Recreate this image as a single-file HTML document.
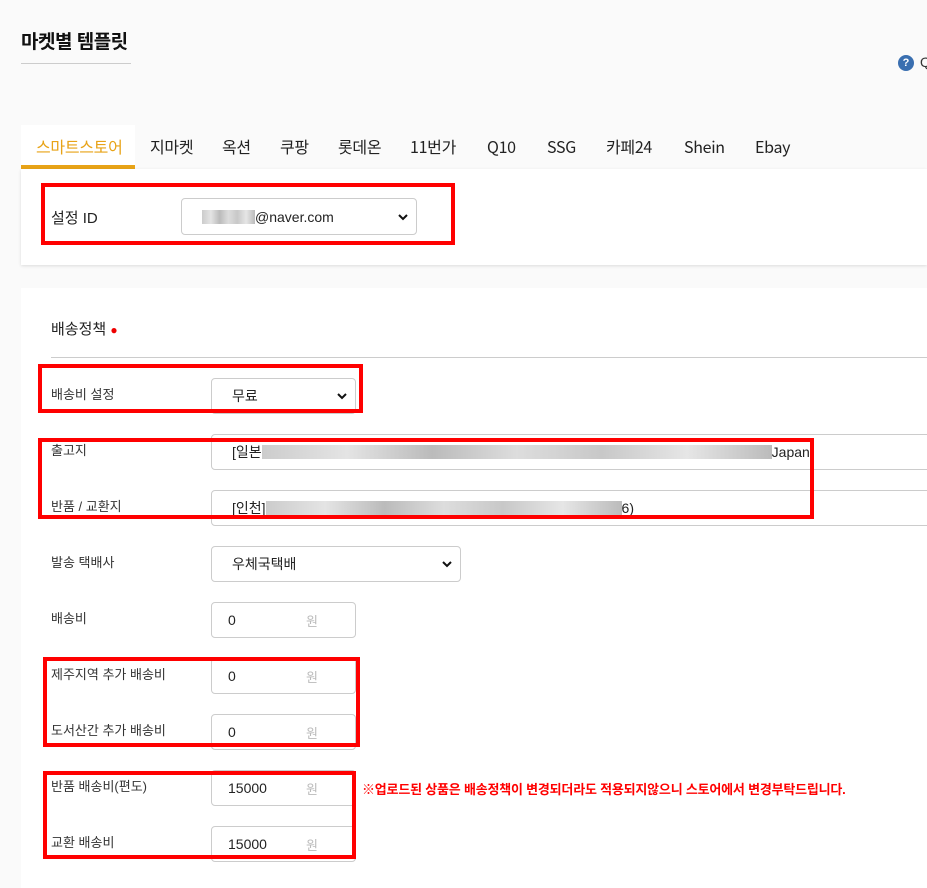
<!DOCTYPE html><html><head><meta charset="utf-8"><style>
*{box-sizing:border-box;margin:0;padding:0}
body{width:927px;height:887px;overflow:hidden;background:#fafafa;font-family:"Liberation Sans","Noto Sans CJK KR",sans-serif;color:#222;position:relative}
.a{position:absolute}
.tab{position:absolute;top:136px;height:20px;line-height:20px;font-size:16px;color:#222;font-family:"Noto Sans CJK KR","Liberation Sans",sans-serif;letter-spacing:-0.3px}
.box{position:absolute;background:#fff;border:1px solid #ccc;border-radius:4px;font-size:14px;padding-left:16px;display:flex;align-items:center}
.red{position:absolute;border:4px solid #f00}
.lab{position:absolute;left:51px;font-size:13px;color:#333;line-height:16px}
.won{position:absolute;left:94px;color:#bbb;font-size:13px}
.chev{position:absolute;right:8px;top:50%;margin-top:-4px}
.blur{display:inline-block;height:14px;background:linear-gradient(90deg,#ccc,#e4e4e4,#bbb,#ddd,#c8c8c8,#e6e6e6,#bbb)}
</style></head><body>
<div class="a" style="left:21px;top:27px;font-size:19px;font-weight:bold;color:#111;letter-spacing:-0.5px">마켓별 템플릿</div>
<div class="a" style="left:21px;top:63px;width:110px;height:1px;background:#ccc"></div>
<div class="a" style="left:898px;top:55px;width:16px;height:16px;border-radius:50%;background:#3a6fb0;color:#fff;font-size:11px;font-weight:bold;text-align:center;line-height:16px">?</div>
<div class="a" style="left:920px;top:54px;font-size:14px;color:#333">Q</div>
<div class="a" style="left:21px;top:125px;width:114px;height:44px;background:#fff;border-bottom:4px solid #e8a317"></div>
<div class="tab" style="left:36px;color:#e8a317">스마트스토어</div>
<div class="tab" style="left:150px">지마켓</div>
<div class="tab" style="left:222px">옥션</div>
<div class="tab" style="left:280px">쿠팡</div>
<div class="tab" style="left:338px">롯데온</div>
<div class="tab" style="left:410px">11번가</div>
<div class="tab" style="left:487px">Q10</div>
<div class="tab" style="left:547px">SSG</div>
<div class="tab" style="left:606px">카페24</div>
<div class="tab" style="left:684px">Shein</div>
<div class="tab" style="left:755px">Ebay</div>
<div class="a" style="left:21px;top:169px;width:906px;height:96px;background:#fff;box-shadow:0 1px 3px rgba(0,0,0,.12)"></div>
<div class="a" style="left:21px;top:288px;width:906px;height:600px;background:#fff"></div>
<div class="a" style="left:51px;top:207px;font-size:15px">설정 ID</div>
<div class="box" style="left:181px;top:198px;width:236px;height:37px;padding-left:20px"><span class="blur" style="width:53px"></span>@naver.com<svg class="chev" width="10" height="8"><path d="M1 2l4 4 4-4" stroke="#111" stroke-width="2" fill="none"/></svg></div>
<div class="red" style="left:41px;top:183px;width:414px;height:62px"></div>
<div class="a" style="left:51px;top:318px;font-size:15px">배송정책 <span style="color:#e00;font-size:12px">●</span></div>
<div class="a" style="left:51px;top:357px;width:876px;height:1px;background:#ccc"></div>
<div class="lab" style="top:387px">배송비 설정</div>
<div class="box" style="left:211px;top:378px;width:145px;height:36px;padding-left:20px">무료<svg class="chev" width="10" height="8"><path d="M1 2l4 4 4-4" stroke="#111" stroke-width="2" fill="none"/></svg></div>
<div class="red" style="left:38px;top:364px;width:325px;height:49px"></div>
<div class="lab" style="top:443px">출고지</div>
<div class="box" style="left:211px;top:434px;width:730px;height:36px;padding-left:20px">[일본<span class="blur" style="width:510px"></span>Japan</div>
<div class="lab" style="top:499px">반품 / 교환지</div>
<div class="box" style="left:211px;top:490px;width:730px;height:36px;padding-left:20px">[인천]<span class="blur" style="width:356px"></span>6)</div>
<div class="red" style="left:38px;top:438px;width:776px;height:81px"></div>
<div class="lab" style="top:555px">발송 택배사</div>
<div class="box" style="left:211px;top:546px;width:250px;height:36px;padding-left:20px">우체국택배<svg class="chev" width="10" height="8"><path d="M1 2l4 4 4-4" stroke="#111" stroke-width="2" fill="none"/></svg></div>
<div class="lab" style="top:611px">배송비</div>
<div class="box" style="left:211px;top:602px;width:145px;height:36px">0<span class="won">원</span></div>
<div class="lab" style="top:667px">제주지역 추가 배송비</div>
<div class="box" style="left:211px;top:658px;width:145px;height:36px">0<span class="won">원</span></div>
<div class="lab" style="top:723px">도서산간 추가 배송비</div>
<div class="box" style="left:211px;top:714px;width:145px;height:36px">0<span class="won">원</span></div>
<div class="red" style="left:43px;top:657px;width:317px;height:90px"></div>
<div class="lab" style="top:779px">반품 배송비(편도)</div>
<div class="box" style="left:211px;top:770px;width:145px;height:36px">15000<span class="won">원</span></div>
<div class="lab" style="top:835px">교환 배송비</div>
<div class="box" style="left:211px;top:826px;width:145px;height:36px">15000<span class="won">원</span></div>
<div class="red" style="left:43px;top:771px;width:313px;height:88px"></div>
<div class="a" style="left:362px;top:779px;font-size:13px;font-weight:bold;color:#f00;letter-spacing:-0.2px">※업로드된 상품은 배송정책이 변경되더라도 적용되지않으니 스토어에서 변경부탁드립니다.</div>
</body></html>
